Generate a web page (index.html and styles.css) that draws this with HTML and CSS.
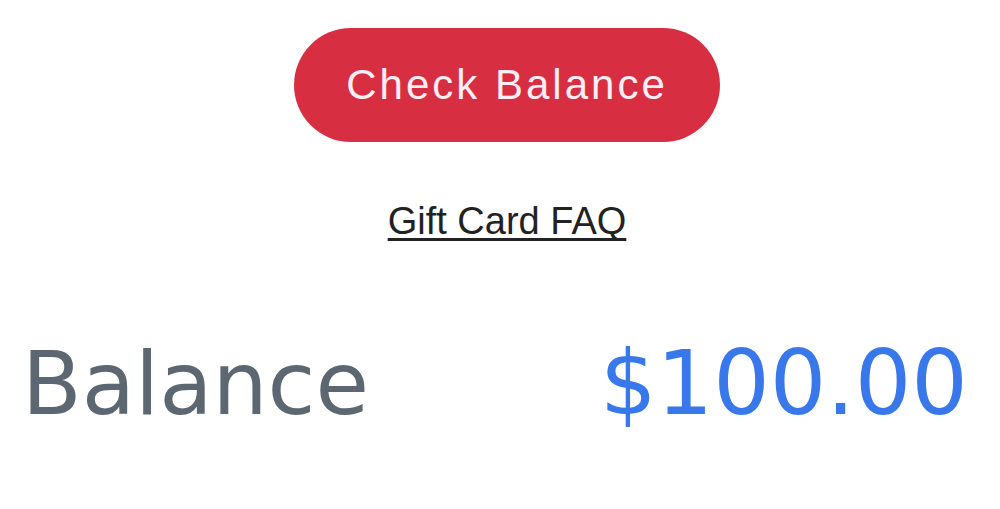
FILE: index.html
```html
<!doctype html>
<html lang="en">
<head>
    <meta charset="UTF-8">
    <meta name="viewport" content="width=device-width, initial-scale=1.0">
    <title>Gift Card Balance</title>
    <link rel="stylesheet" href="styles.css">
</head>
<body>
    <main class="gift-card">
        <button type="button" class="check-button">Check Balance</button>
        <a href="#faq" class="faq-link">Gift Card FAQ</a>
        <div class="balance">
            <span class="balance-label">Balance</span>
            <span class="balance-amount">$100.00</span>
        </div>
    </main>
</body>
</html>
```
FILE: styles.css
```css
* {
    box-sizing: border-box;
}

body {
    margin: 0;
    background: #fff;
    font-family: "Liberation Sans", Arial, sans-serif;
}

.gift-card {
    display: flex;
    flex-direction: column;
    align-items: center;
    padding: 28px 0 0 14px;
}

.check-button {
    padding: 32px 52px;
    border: 0;
    border-radius: 57px;
    background: #d82e42;
    color: #ffeef6;
    font-family: inherit;
    font-size: 42px;
    line-height: 50px;
    letter-spacing: 3px;
    cursor: pointer;
}

.faq-link {
    margin-top: 55px;
    color: #222;
    font-size: 38px;
    line-height: 48px;
    text-decoration-thickness: 3px;
    text-underline-offset: 4px;
    text-decoration-skip-ink: none;
}

.balance {
    display: flex;
    justify-content: space-between;
    align-items: baseline;
    width: 100%;
    margin-top: 86px;
    padding: 0 32px 0 8px;
    font-family: "DejaVu Sans", Verdana, sans-serif;
    line-height: 104px;
}

.balance-label {
    color: #5d6771;
    font-size: 87px;
}

.balance-amount {
    color: #3878eb;
    font-size: 89px;
}
```
